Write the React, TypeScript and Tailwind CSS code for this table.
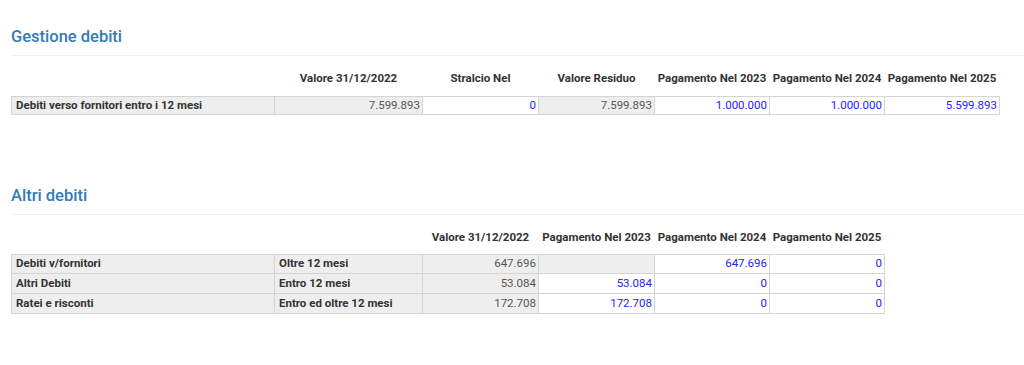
import React from "react";

type Cell = { text: string; kind: "label" | "value" | "input" | "empty" };

const W1 = ["w-[264px]", "w-[149px]", "w-[117px]", "w-[117px]", "w-[116px]", "w-[116px]", "w-[116px]"];
const W2 = ["w-[264px]", "w-[149px]", "w-[117px]", "w-[117px]", "w-[116px]", "w-[116px]"];

function DataCell({ cell, w, first }: { cell: Cell; w: string; first: boolean }) {
  const base = `${w} h-full border border-[#d4d4d4] flex items-center text-[11.5px] ${first ? "" : "-ml-px"}`;
  if (cell.kind === "label")
    return <div className={`${base} bg-[#eeeeee] pl-[4px] font-bold text-[#333333] whitespace-nowrap`}>{cell.text}</div>;
  if (cell.kind === "value")
    return <div className={`${base} bg-[#eeeeee] justify-end pr-[2px] text-[#555555]`}>{cell.text}</div>;
  if (cell.kind === "empty") return <div className={`${base} bg-[#eeeeee]`} />;
  return <div className={`${base} bg-white justify-end pr-[2px] text-[#2424ff]`}>{cell.text}</div>;
}

function Header({ labels, widths }: { labels: string[]; widths: string[] }) {
  return (
    <div className="flex h-[20px]">
      {labels.map((l, i) => (
        <div
          key={i}
          className={`${widths[i]} ${i === 0 ? "" : "-ml-px"} flex items-center justify-center text-[11.5px] font-bold text-[#333333] whitespace-nowrap`}
        >
          {l}
        </div>
      ))}
    </div>
  );
}

function Rows({ rows, widths, heights }: { rows: Cell[][]; widths: string[]; heights: string[] }) {
  return (
    <div className="flex flex-col">
      {rows.map((r, ri) => (
        <div key={ri} className={`flex ${heights[ri]} ${ri === 0 ? "" : "-mt-px"}`}>
          {r.map((c, ci) => (
            <DataCell key={ci} cell={c} w={widths[ci]} first={ci === 0} />
          ))}
        </div>
      ))}
    </div>
  );
}

function Title({ children }: { children: React.ReactNode }) {
  return (
    <div className="text-[16.5px] leading-[18px] font-medium text-[#337ab7] pb-[9px] border-b border-[#eef1f4]">
      {children}
    </div>
  );
}

export default function App() {
  const rows1: Cell[][] = [
    [
      { text: "Debiti verso fornitori entro i 12 mesi", kind: "label" },
      { text: "7.599.893", kind: "value" },
      { text: "0", kind: "input" },
      { text: "7.599.893", kind: "value" },
      { text: "1.000.000", kind: "input" },
      { text: "1.000.000", kind: "input" },
      { text: "5.599.893", kind: "input" },
    ],
  ];
  const rows2: Cell[][] = [
    [
      { text: "Debiti v/fornitori", kind: "label" },
      { text: "Oltre 12 mesi", kind: "label" },
      { text: "647.696", kind: "value" },
      { text: "", kind: "empty" },
      { text: "647.696", kind: "input" },
      { text: "0", kind: "input" },
    ],
    [
      { text: "Altri Debiti", kind: "label" },
      { text: "Entro 12 mesi", kind: "label" },
      { text: "53.084", kind: "value" },
      { text: "53.084", kind: "input" },
      { text: "0", kind: "input" },
      { text: "0", kind: "input" },
    ],
    [
      { text: "Ratei e risconti", kind: "label" },
      { text: "Entro ed oltre 12 mesi", kind: "label" },
      { text: "172.708", kind: "value" },
      { text: "172.708", kind: "input" },
      { text: "0", kind: "input" },
      { text: "0", kind: "input" },
    ],
  ];
  return (
    <div className="w-[1024px] h-[365px] bg-white pl-[11px] pt-[28px] overflow-hidden" style={{ fontFamily: "Roboto, 'Liberation Sans', sans-serif" }}>
      <Title>Gestione debiti</Title>
      <div className="mt-[13px]">
        <Header
          widths={W1}
          labels={["", "Valore 31/12/2022", "Stralcio Nel", "Valore Residuo", "Pagamento Nel 2023", "Pagamento Nel 2024", "Pagamento Nel 2025"]}
        />
      </div>
      <div className="mt-[7px]">
        <Rows rows={rows1} widths={W1} heights={["h-[19px]"]} />
      </div>
      <div className="mt-[72px]">
        <Title>Altri debiti</Title>
      </div>
      <div className="mt-[13px]">
        <Header
          widths={W2}
          labels={["", "", "Valore 31/12/2022", "Pagamento Nel 2023", "Pagamento Nel 2024", "Pagamento Nel 2025"]}
        />
      </div>
      <div className="mt-[6px]">
        <Rows rows={rows2} widths={W2} heights={["h-[20px]", "h-[21px]", "h-[21px]"]} />
      </div>
    </div>
  );
}
